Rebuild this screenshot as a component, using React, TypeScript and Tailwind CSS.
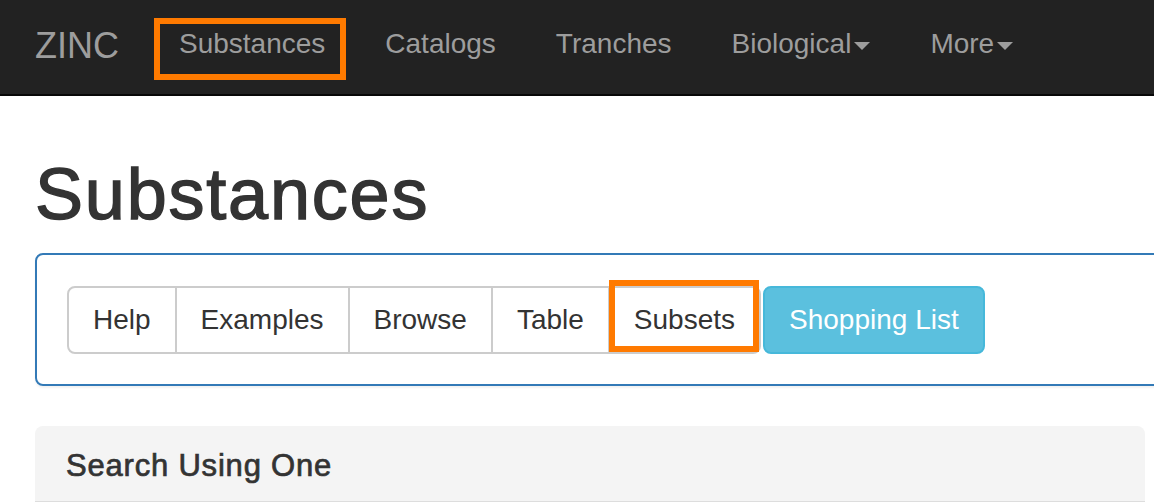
import React from 'react';

const navLinks = ['Catalogs', 'Tranches'];
const groupButtons = ['Help', 'Examples', 'Browse', 'Table'];

function Caret() {
  return (
    <span className="ml-[3px] inline-block h-0 w-0 border-x-[8px] border-t-[8px] border-x-transparent border-t-[#9d9d9d] align-middle" />
  );
}

function Highlight({ className }: { className: string }) {
  return <span className={`pointer-events-none absolute border-[6px] border-[#ff7a00] ${className}`} />;
}

export default function App() {
  return (
    <div
      className="h-[502px] w-[1154px] overflow-hidden bg-white text-[#333]"
      style={{ fontFamily: '"Liberation Sans", Arial, sans-serif' }}
    >
      {/* navbar */}
      <nav className="flex h-[96px] items-start border-b-2 border-[#080808] bg-[#222] pl-[35px] text-[#9d9d9d]">
        <a className="mt-[26px] text-[36px] leading-[40px]">ZINC</a>
        <div className="ml-[30px] mt-[24px] flex text-[28px] leading-[40px]">
          <a className="relative px-[30px]">
            Substances
            <Highlight className="left-[5px] right-[9px] -top-[6px] -bottom-[16px]" />
          </a>
          {navLinks.map((l) => (
            <a key={l} className="px-[30px]">
              {l}
            </a>
          ))}
          <a className="px-[30px]">
            Biological
            <Caret />
          </a>
          <a className="px-[30px]">
            More
            <Caret />
          </a>
        </div>
      </nav>

      {/* page */}
      <div className="pl-[35px]">
        <h1 className="mt-[59px] text-[72px] leading-[79px] tracking-[1.8px] [-webkit-text-stroke:1.4px_#333]">
          Substances
        </h1>

        <div className="mt-[19px] w-[1140px] rounded-[8px] border-2 border-[#337ab7] px-[30px] pb-[30px] pt-[31px] shadow-[0_2px_2px_rgba(0,0,0,0.05)]">
          <div className="flex items-stretch text-[28px] leading-[40px]">
            <div className="flex">
              {groupButtons.map((b, i) => (
                <button
                  key={b}
                  className={`border-2 border-[#ccc] bg-white px-[24px] py-[12px] ${
                    i === 0 ? 'rounded-l-[8px]' : '-ml-[2px]'
                  }`}
                >
                  {b}
                </button>
              ))}
              <button className="relative -ml-[2px] rounded-r-[8px] border-2 border-[#ccc] bg-white px-[24px] py-[12px]">
                Subsets
                <Highlight className="-left-[1px] -top-[8px] right-0 bottom-0" />
              </button>
            </div>
            <button className="ml-[2px] rounded-[8px] border-2 border-[#46b8da] bg-[#5bc0de] px-[24px] py-[12px] text-white">
              Shopping List
            </button>
          </div>
        </div>

        <div className="mt-[40px] w-[1110px] rounded-t-[8px] border-b-2 border-[#ddd] bg-[#f4f4f4] px-[31px] pb-[18px] pt-[23px]">
          <h3 className="text-[31px] leading-[34px] tracking-[0.8px] [-webkit-text-stroke:0.7px_#333]">
            Search Using One
          </h3>
        </div>
      </div>
    </div>
  );
}
